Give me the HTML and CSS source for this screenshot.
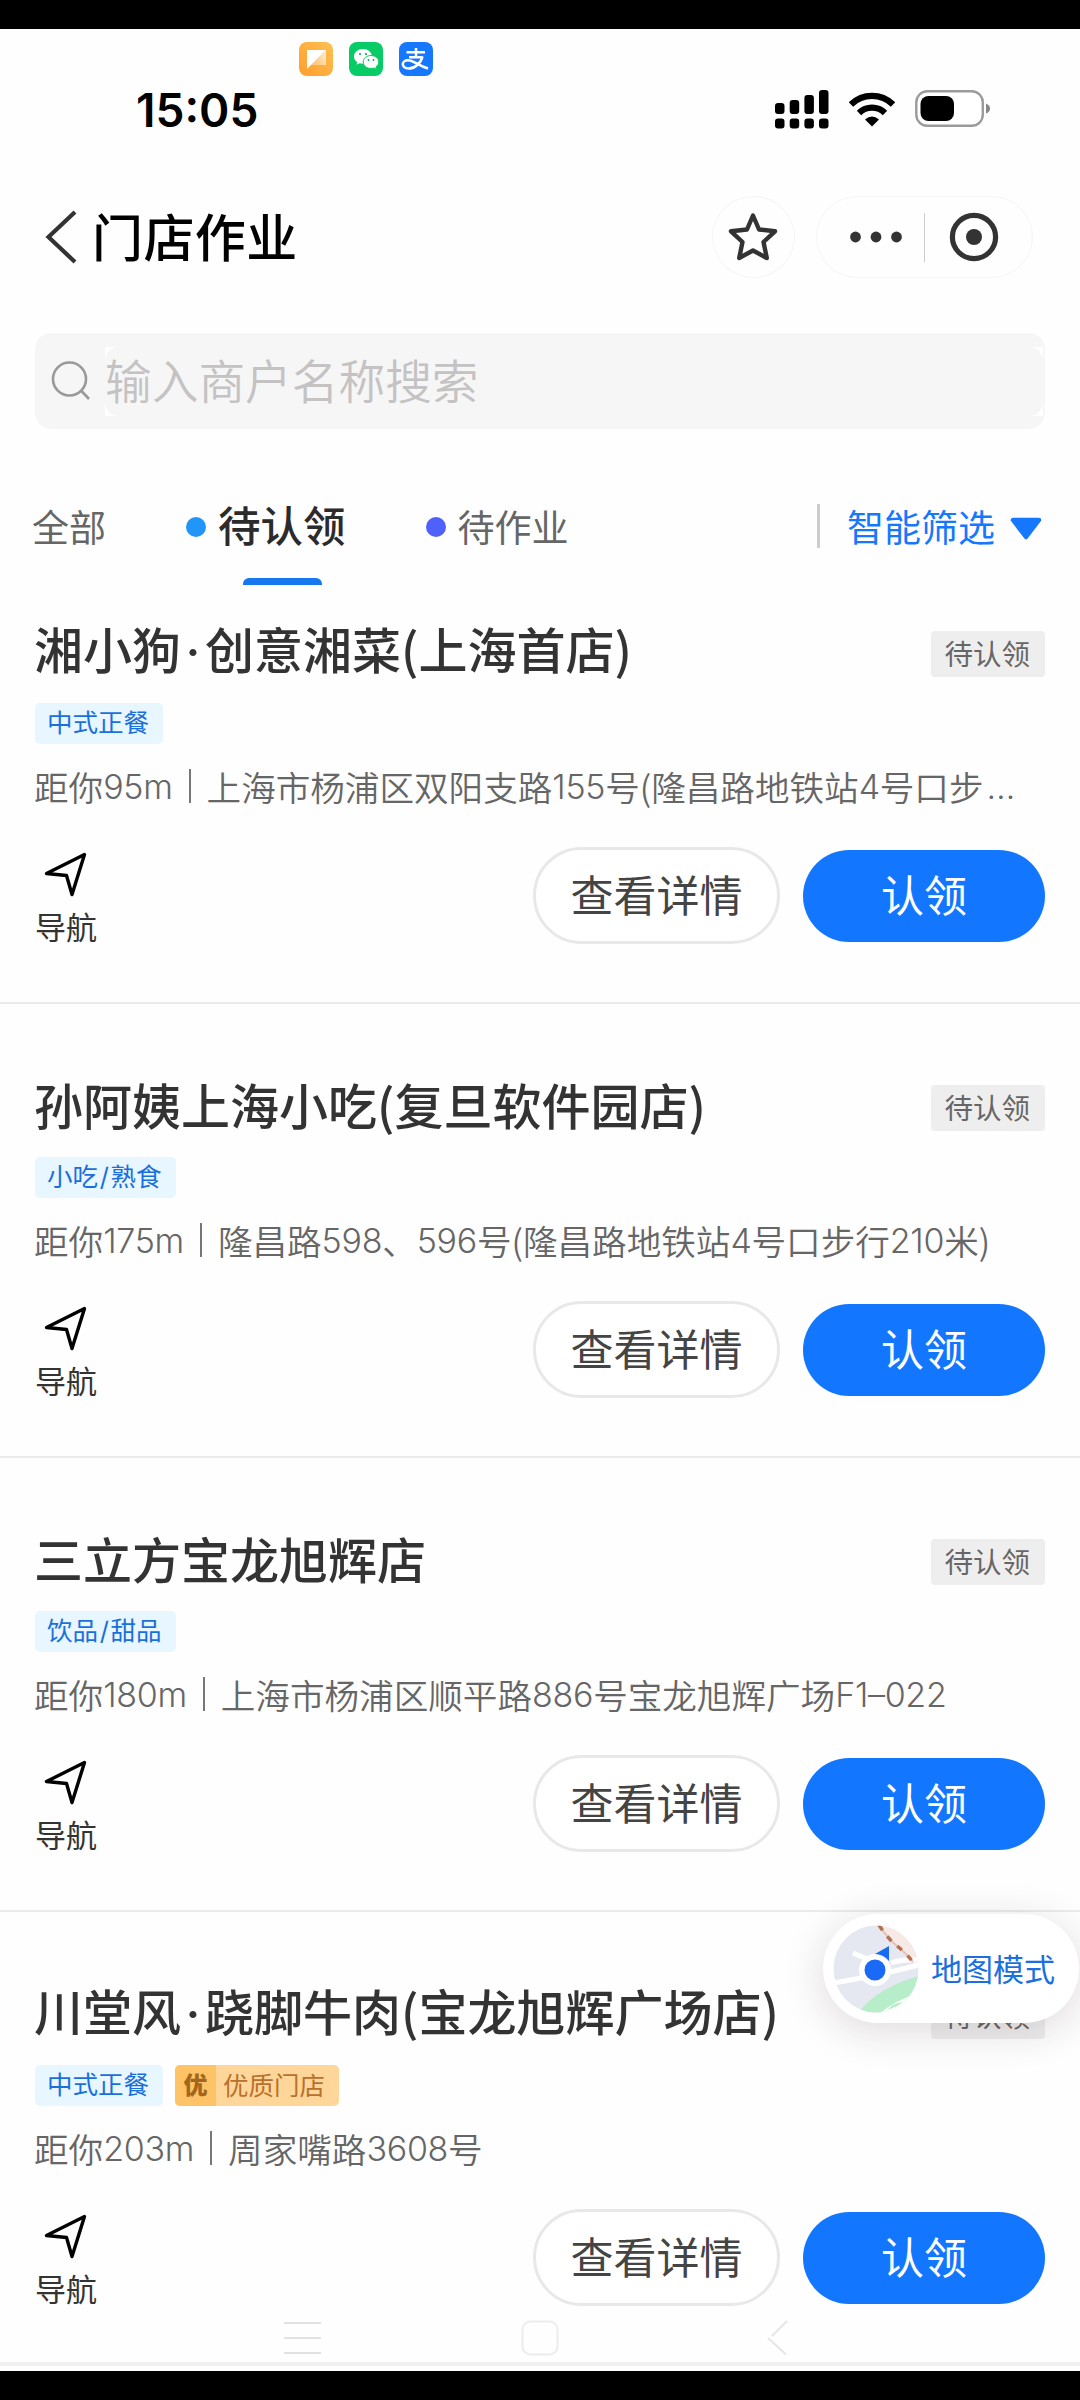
FILE: index.html
```html
<!DOCTYPE html>
<html lang="zh-CN">
<head>
<meta charset="utf-8">
<title>门店作业</title>
<link rel="stylesheet" href="styles.css">
</head>
<body>
<svg class="defs" width="0" height="0" aria-hidden="true">
  <symbol id="nav-arrow" viewBox="0 0 44 46">
    <path d="M40.5 2.5 2.5 21.5 22.5 23.5 28 42.5Z" fill="none" stroke="#000" stroke-width="3.4" stroke-linejoin="round"/>
  </symbol>
</svg>
<div class="screen">
  <header class="status">
    <div class="apps">
      <svg class="app" viewBox="0 0 34 34"><defs><linearGradient id="og" x1="0" y1="1" x2="1" y2="0"><stop offset="0" stop-color="#ff9d2e"/><stop offset="1" stop-color="#fdc152"/></linearGradient><linearGradient id="fd" x1="0.3" y1="0.7" x2="1" y2="0.3"><stop offset="0" stop-color="#fff" stop-opacity=".35"/><stop offset="1" stop-color="#fff" stop-opacity=".7"/></linearGradient></defs><rect width="34" height="34" rx="8" fill="url(#og)"/><path d="M8 8H27L8 27Z" fill="#fff"/><path d="M27 8V23H12Z" fill="url(#fd)"/></svg>
      <svg class="app" viewBox="0 0 34 34"><rect width="34" height="34" rx="8" fill="#07cc65"/><path d="M14 7C9 7 5 10.200 5 14.500c0 2.400 1.200 4.300 3.200 5.600L7.500 22.800l3.100-1.600c1 .3 2.100.5 3.400.5 5 0 9-3.200 9-7.200S19 7 14 7Z" fill="#fff"/><path d="M22 13.500c-4.400 0-7.800 2.900-7.800 6.500s3.400 6.500 7.800 6.500c1 0 2-.2 2.800-.4l2.600 1.300-.6-2.300c1.800-1.200 2.900-3 2.900-5.100 0-3.600-3.300-6.500-7.700-6.500Z" fill="#fff" stroke="#07cc65" stroke-width="1"/><g fill="#07a850"><circle cx="11" cy="12" r="1.100"/><circle cx="17" cy="12" r="1.100"/><circle cx="19.500" cy="18" r=".9"/><circle cx="24.500" cy="18" r=".9"/></g></svg>
      <svg class="app" viewBox="0 0 34 34"><rect width="34" height="34" rx="8" fill="#1677ff"/><g fill="none" stroke="#fff" stroke-width="2.500"><path d="M17 6V15M7.500 10.200H26M10 15.300H23.500"/><path d="M23.500 14.500C22 21 16 26.500 9.500 26.500 6 26.500 3.800 24.700 3.800 22.300 3.800 20 6 18.300 9 18.300 14 18.300 19 23.500 29 26.500"/></g></svg>
    </div>
    <div class="status-row">
      <span class="time">15:05</span>
      <span class="indicators">
        <svg width="54" height="39" viewBox="0 0 54 39"><rect x="0" y="13" width="9.500" height="11" rx="3"/><rect x="14.700" y="10" width="9.500" height="14" rx="3"/><rect x="29.400" y="5" width="9.500" height="19" rx="3"/><rect x="44" y="0" width="9.500" height="24" rx="3"/><rect x="0" y="28.500" width="9.500" height="10" rx="3"/><rect x="14.700" y="28.500" width="9.500" height="10" rx="3"/><rect x="29.400" y="28.500" width="9.500" height="10" rx="3"/><rect x="44" y="28.500" width="9.500" height="10" rx="3"/></svg>
        <svg class="wifi" width="46" height="35" viewBox="0 0 46 35"><g fill="none" stroke="#000" stroke-width="6.200"><path d="M2 12.500A30 30 0 0 1 44 12.500"/><path d="M10 21A18.500 18.500 0 0 1 36 21"/></g><path d="M16 27.500Q23 21.500 30 27.500L23 34.500Z"/></svg>
        <svg class="battery" width="76" height="38" viewBox="0 0 76 38"><rect x="1.300" y="1.300" width="66.500" height="34.500" rx="11" fill="#fff" stroke="#9b9b9b" stroke-width="2.400"/><rect x="5.500" y="6" width="33.500" height="25" rx="8"/><path d="M71 13.500Q75 15 75 18.500T71 23.500Z" fill="#888"/></svg>
      </span>
    </div>
  </header>

  <nav class="titlebar">
    <svg class="back" width="32" height="54" viewBox="0 0 32 54"><path d="M30 2 3.500 27 30 52" fill="none" stroke="#333" stroke-width="4.200"/></svg>
    <h1>门店作业</h1>
    <span class="fav"><svg width="50" height="50" viewBox="0 0 50 50"><path d="M25 3.500 31 17.500 47 19.300 35.500 30 38.800 46 25 38.500 11.200 46 14.500 30 3 19.300 19 17.500Z" fill="none" stroke="#333" stroke-width="4.400" stroke-linejoin="round"/></svg></span>
    <span class="capsule">
      <svg width="52" height="12" viewBox="0 0 52 12" fill="#333"><circle cx="5.500" cy="6" r="5.400"/><circle cx="26" cy="6" r="5.400"/><circle cx="46.500" cy="6" r="5.400"/></svg>
      <i class="bar"></i>
      <svg width="50" height="50" viewBox="0 0 50 50"><circle cx="25" cy="25" r="21.600" fill="none" stroke="#333" stroke-width="5.200"/><circle cx="25" cy="25" r="8" fill="#333"/></svg>
    </span>
  </nav>

  <div class="search">
    <svg width="40" height="40" viewBox="0 0 40 40" fill="none" stroke="#999" stroke-width="2.600"><circle cx="18.500" cy="18" r="16.500"/><path d="M30 29.500 38 38"/></svg>
    <div class="field"><span>输入商户名称搜索</span></div>
  </div>

  <div class="tabs">
    <span class="tab all">全部</span>
    <span class="tab on"><i class="dot"></i><span>待认领</span></span>
    <span class="tab todo"><i class="dot violet"></i>待作业</span>
    <span class="filter">智能筛选<svg width="32" height="23" viewBox="0 0 32 23"><path d="M3 3H29L16 20Z" fill="#1677ff" stroke="#1677ff" stroke-width="4.500" stroke-linejoin="round"/></svg></span>
  </div>

  <main>
    <article class="card">
      <div class="head"><h2>湘小狗<b class="mid">·</b>创意湘菜(上海首店)</h2><span class="state">待认领</span></div>
      <div class="tags"><span class="tag">中式正餐</span></div>
      <p class="addr">距你<b>95m</b><i class="sep"></i>上海市杨浦区双阳支路<b>155</b>号(隆昌路地铁站<b>4</b>号口步<b class="more">…</b></p>
      <div class="actions"><span class="go"><svg width="44" height="46"><use href="#nav-arrow"/></svg>导航</span><span class="btn">查看详情</span><span class="btn primary">认领</span></div>
    </article>
    <article class="card">
      <div class="head"><h2>孙阿姨上海小吃(复旦软件园店)</h2><span class="state">待认领</span></div>
      <div class="tags"><span class="tag">小吃<i>/</i>熟食</span></div>
      <p class="addr">距你<b>175m</b><i class="sep"></i>隆昌路<b>598</b>、<b>596</b>号(隆昌路地铁站<b>4</b>号口步行<b>210</b>米)</p>
      <div class="actions"><span class="go"><svg width="44" height="46"><use href="#nav-arrow"/></svg>导航</span><span class="btn">查看详情</span><span class="btn primary">认领</span></div>
    </article>
    <article class="card">
      <div class="head"><h2>三立方宝龙旭辉店</h2><span class="state">待认领</span></div>
      <div class="tags"><span class="tag">饮品<i>/</i>甜品</span></div>
      <p class="addr">距你<b>180m</b><i class="sep"></i>上海市杨浦区顺平路<b>886</b>号宝龙旭辉广场<b>F1–022</b></p>
      <div class="actions"><span class="go"><svg width="44" height="46"><use href="#nav-arrow"/></svg>导航</span><span class="btn">查看详情</span><span class="btn primary">认领</span></div>
    </article>
    <article class="card last">
      <div class="head"><h2>川堂风<b class="mid">·</b>跷脚牛肉(宝龙旭辉广场店)</h2><span class="state">待认领</span></div>
      <div class="tags"><span class="tag">中式正餐</span><span class="quality"><b>优</b><span>优质门店</span></span></div>
      <p class="addr">距你<b>203m</b><i class="sep"></i>周家嘴路<b>3608</b>号</p>
      <div class="actions"><span class="go"><svg width="44" height="46"><use href="#nav-arrow"/></svg>导航</span><span class="btn">查看详情</span><span class="btn primary">认领</span></div>
    </article>
  </main>

  <div class="map-mode">
    <svg width="86" height="88" viewBox="0 0 86 88"><defs><clipPath id="mc"><ellipse cx="43" cy="44" rx="42.500" ry="43.500"/></clipPath></defs><g clip-path="url(#mc)"><rect width="86" height="88" fill="#e5e8f1"/><path d="M46 0 82 40H86V0Z" fill="#f6e9e6"/><path d="M0 58Q40 52 86 40" fill="none" stroke="#fff" stroke-width="5"/><path d="M20 28 34 34M58 38Q70 34 86 35" fill="none" stroke="#fff" stroke-width="5"/><path d="M25 88Q45 62 86 51V70L60 88Z" fill="#b8edca"/><path d="M45 90Q60 76 86 68V88Z" fill="#fff"/><path d="M55 84Q60 78 70 77Q64 82 57 84Z" fill="#b8edca"/><path d="M46 0Q55 14 64 21T80 37" fill="none" stroke="#e8bfb0" stroke-width="2"/><path d="M46 0Q55 14 64 21T80 37" fill="none" stroke="#b5714f" stroke-width="3.500" stroke-dasharray="6 8"/></g><circle cx="42" cy="45" r="16" fill="#fff"/><path d="M42 29 56 21V36Q50 29 42 29Z" fill="#1b6af5"/><circle cx="42" cy="45" r="10.500" fill="#1b6af5"/></svg>
    <span>地图模式</span>
  </div>

  <div class="sysnav">
    <svg width="38" height="36" viewBox="0 0 38 36" stroke="#e2e2e2" stroke-width="2"><path d="M0 3H37M0 18H37M0 33H37"/></svg>
    <svg width="38" height="36" viewBox="0 0 38 36"><rect x="1.500" y="1.500" width="35" height="33" rx="8" fill="none" stroke="#ececec" stroke-width="2"/></svg>
    <svg width="22" height="36" viewBox="0 0 22 36" fill="none" stroke="#e6e6e6" stroke-width="2"><path d="M20 1 5 16M1 18 19 34.500"/></svg>
  </div>
</div>
</body>
</html>
```
FILE: styles.css
```css
* { box-sizing: border-box; }
body {
  margin: 0;
  background: #000;
  font-family: "Noto Sans CJK SC", sans-serif;
  color: #333;
}
h1, h2, p { margin: 0; }
i, b { font-style: normal; }
svg { display: block; flex: none; }
.defs { position: absolute; }
.screen {
  position: relative;
  width: 1080px;
  height: 2400px;
  border-top: 29px solid #000;
  border-bottom: 29px solid #000;
  background: #fefefe;
  overflow: hidden;
  white-space: nowrap;
}

/* status bar */
.status { height: 131px; padding-top: 13px; }
.apps { display: flex; gap: 16px; padding-left: 299px; }
.app { width: 34px; height: 34px; }
.status-row {
  display: flex;
  justify-content: space-between;
  align-items: center;
  height: 40px;
  margin-top: 13px;
  padding: 0 89px 0 136px;
}
.time { padding-top: 1px; font: 600 46px/40px Inter, sans-serif; color: #000; }
.indicators { display: flex; align-items: center; }
.wifi { margin-left: 20px; }
.battery { margin-left: 20px; }

/* title bar */
.titlebar { display: flex; align-items: center; height: 154px; padding: 0 47px 0 45px; }
h1 { margin: -4px 0 0 15px; font-size: 51px; font-weight: 500; line-height: 60px; letter-spacing: .4px; color: #000; }
.fav {
  display: flex; align-items: center; justify-content: center;
  width: 83px; height: 82px; margin-left: auto;
  border: 1.500px solid #f5f5f5; border-radius: 50%;
}
.capsule {
  display: flex; align-items: center;
  width: 217px; height: 82px; margin-left: 21px; padding-left: 33px;
  border: 1.500px solid #f5f5f5; border-radius: 41px;
}
.fav svg { margin-right: 2px; }
.bar { width: 1px; height: 49px; margin: 0 24px 0 22px; background: #ccc; }

/* search */
.search {
  display: flex; align-items: center;
  height: 96px; margin: 19px 35px 0; padding: 0 2px 0 16px;
  border-radius: 16px; background: #f6f6f6;
}
.field { flex: 1; margin-left: 14px; background: #fff; }
.field span {
  display: block; height: 69px;
  border-radius: 14px; background: #f6f6f6;
  font-size: 46.700px; line-height: 64px; color: #c4c2c3; font-weight: 350;
}

/* tabs */
.tabs { display: flex; align-items: center; height: 121px; padding: 73px 38px 0 32px; }
.tab { display: flex; align-items: center; height: 75px; font-size: 37px; color: #666; }
.tab.on { position: relative; margin-left: 80px; font-size: 42.500px; font-weight: 500; color: #2b2b2b; }
.tab.on span { margin-top: -5px; }
.tab.on::after {
  content: ""; position: absolute; left: 57px; top: 89px;
  width: 79px; height: 7px; border-radius: 6px 6px 0 0; background: #1677ee;
}
.tab.todo { margin-left: 80px; }
.dot { width: 20px; height: 20px; margin: 1px 12px 0 0; border-radius: 50%; background: #2196f8; }
.violet { background: #5060fb; }
.filter {
  display: flex; align-items: center; gap: 15px;
  height: 44px; margin-left: auto; padding-left: 27px;
  border-left: 3px solid #ccc; font-size: 37px; color: #1677ff;
}
.filter svg { margin-top: 4px; }

/* store cards */
.card { height: 454px; padding: 71px 35px 0 34px; border-bottom: 2px solid #ebebeb; }
.last { border-bottom: 4px solid #f0f0f0; }
.head { display: flex; align-items: center; justify-content: space-between; height: 60px; }
h2 { margin-top: -2px; font-size: 49px; font-weight: 500; line-height: 60px; color: #333; }
.mid { display: inline-block; width: 24px; text-align: center; font-family: Inter, sans-serif; font-weight: 500; }
.state {
  height: 46px; margin-top: 6px; padding: 0 15px 0 13px;
  border-radius: 4px; background: #eee;
  font-size: 28.500px; line-height: 43px; color: #666;
}
.tags { display: flex; gap: 12px; margin: 22px 0 0 1px; }
.tag {
  height: 41px; padding: 0 14px 0 12px; border-radius: 5px; background: #e7f6ff;
  font-family: Inter, "Noto Sans CJK SC", sans-serif;
  font-size: 25.500px; line-height: 40px; color: #1b6fdc;
}
.tag i { padding: 0 1.700px; }
.quality {
  display: flex; height: 41px; border-radius: 5px; overflow: hidden; background: #ffd69a;
  font-size: 25.500px; line-height: 38px; color: #b8712c;
}
.quality b { width: 41px; background: #fdc366; color: #a2661c; font-size: 24px; font-weight: 900; text-align: center; }
.quality span { padding: 0 14px 0 7px; }
.addr { display: flex; align-items: center; height: 46px; margin-top: 19px; font-size: 34.600px; font-weight: 350; line-height: 46px; color: #666; }
.addr b { font: 300 34px/46px Inter, sans-serif; letter-spacing: -.3px; padding-top: 1px; }
.addr .more { letter-spacing: 0; padding-left: 3px; }
.sep { width: 2px; height: 34px; margin: 0 16px; background: #777; }
.actions { display: flex; align-items: center; height: 96px; margin-top: 38px; }
.go { display: flex; flex-direction: column; margin: 6px auto 0 1px; font-size: 31px; line-height: 36px; color: #333; }
.go svg { margin: 0 0 10px 9px; }
.btn {
  width: 247px; height: 97px; border: 3px solid #e8e8e8; border-radius: 49px; background: #fff;
  font-size: 43px; line-height: 87px; text-align: center; color: #444;
}
.primary { width: 242px; height: 92px; margin: 1px 0 0 23px; border: 0; background: #1276ff; color: #fff; }

/* floating map switch */
.map-mode {
  position: absolute; left: 823px; top: 1885px;
  display: flex; align-items: center; gap: 12px;
  width: 256px; height: 109px; padding-left: 10px;
  border-radius: 55px; background: #fff;
  box-shadow: 0 8px 40px rgba(60, 30, 40, .16);
  font-size: 31px; line-height: 44px; color: #1b6fe0;
}
.map-mode span { margin-top: -2px; }

/* system navigation overlay */
.sysnav { position: absolute; left: 284px; top: 2291px; display: flex; }
.sysnav svg + svg { margin-left: 199px; }
.sysnav svg:last-child { margin-left: 208px; }
```
